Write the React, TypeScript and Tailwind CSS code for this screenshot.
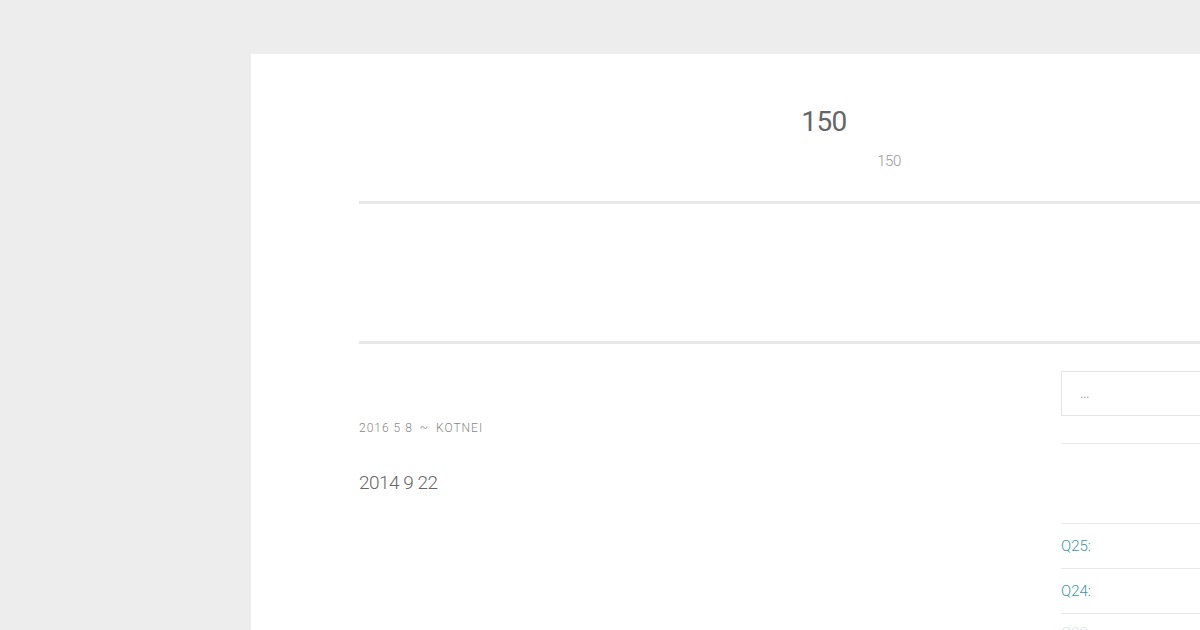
export default function App() {
  const font = { fontFamily: 'Roboto, "Liberation Sans", sans-serif' };
  return (
    <div className="w-[1200px] h-[630px] overflow-hidden bg-[#ededed] pt-[54px] pl-[251px]" style={font}>
      <div className="w-[1100px] h-[700px] bg-white pl-[108px]">
        {/* Header */}
        <div className="w-[930px] pt-[50px] h-[147px] text-center">
          <h1 className="text-[28px] leading-[36px] font-normal tracking-[-0.5px] text-[#666]">150</h1>
          <p className="mt-[12px] pl-[130px] text-[15px] leading-[18px] font-light tracking-[-0.5px] text-[#999]">150</p>
        </div>
        <div className="h-[3px] bg-[#e8e8e8]" />
        <div className="h-[137px]" />
        <div className="h-[3px] bg-[#e8e8e8]" />

        <div className="flex">
          {/* Main */}
          <div className="w-[702px] pt-[75px]">
            <div className="flex items-center gap-[7px] text-[12px] tracking-[1px] text-[#888] font-light">
              <span>2016 5 8</span>
              <span>~</span>
              <span>KOTNEI</span>
            </div>
            <p className="mt-[32px] text-[19px] tracking-[-0.5px] font-light text-[#666]">2014 9 22</p>
          </div>

          {/* Sidebar */}
          <div className="flex-1 pt-[27px]">
            <div className="h-[45px] border border-[#e5e5e5] border-r-0 flex items-center pl-[18px] text-[14px] text-[#aaa]">…</div>
            <div className="mt-[27px] h-px bg-[#e8e8e8]" />
            <div className="h-[79px]" />
            <div className="h-px bg-[#e8e8e8]" />
            <div className="h-[44px] flex items-center text-[15px] font-light text-[#3c96a6]">Q25:</div>
            <div className="h-px bg-[#e8e8e8]" />
            <div className="h-[44px] flex items-center text-[15px] font-light text-[#3c96a6]">Q24:</div>
            <div className="h-px bg-[#e8e8e8]" />
            <div className="h-[30px] flex items-end text-[15px] font-light text-[#d4e7ea]">Q23:</div>
          </div>
        </div>
      </div>
    </div>
  );
}
